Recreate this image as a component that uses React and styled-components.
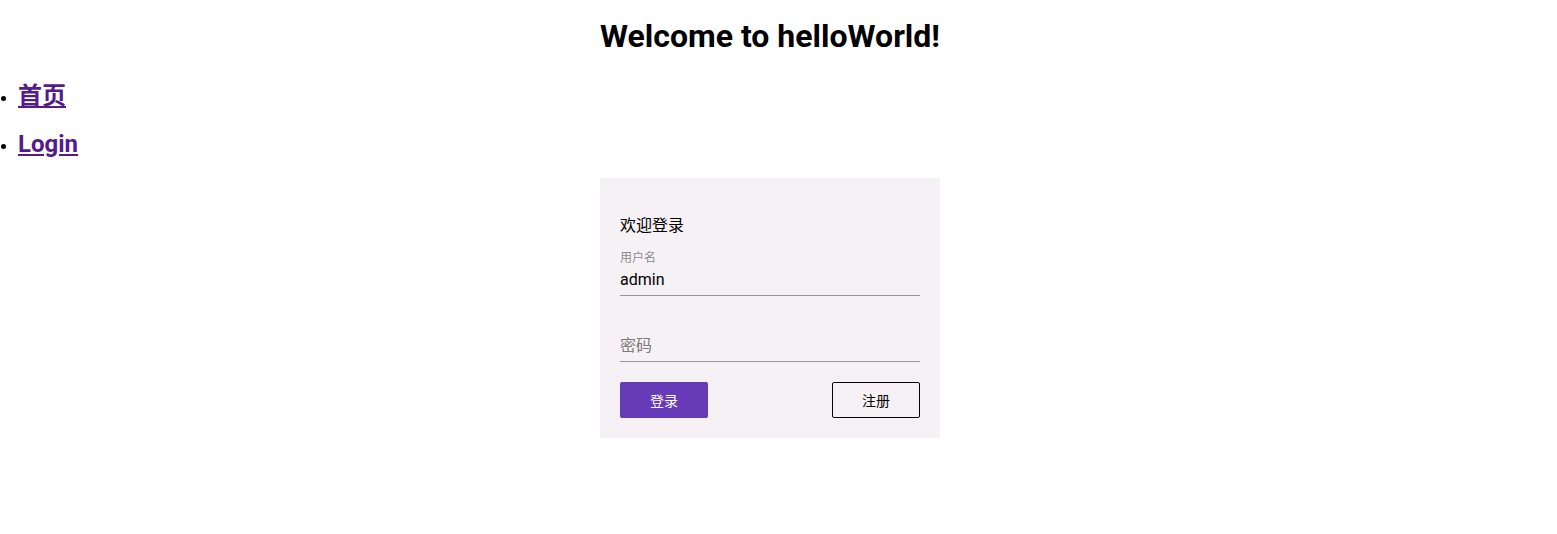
import React from 'react';
import styled, { createGlobalStyle } from 'styled-components';

const GlobalStyle = createGlobalStyle`
  body {
    margin: 0;
    padding-right: 17px;
    font-family: Roboto, "Noto Sans CJK SC", sans-serif;
    color: #000;
    background: #fff;
  }
`;

const Title = styled.h1`
  margin: 17px 0 0;
  font-size: 32px;
  font-weight: 700;
  line-height: 38px;
  text-align: center;
`;

const NavList = styled.ul`
  margin: 27px 0 0;
  padding-left: 18px;
  list-style: disc;
`;

const NavItem = styled.li`
  font-size: 24px;
  font-weight: 700;
  line-height: 28px;
  margin-bottom: 20px;
  &::marker {
    font-size: 16px;
  }
`;

const NavLink = styled.a`
  color: #551a8b;
  text-decoration: underline;
`;

const CardRow = styled.div`
  display: flex;
  justify-content: center;
`;

const Card = styled.div`
  width: 340px;
  box-sizing: border-box;
  background: #f5f1f5;
  padding: 36px 20px 20px;
  display: flex;
  flex-direction: column;
`;

const CardTitle = styled.div`
  font-size: 16px;
  line-height: 24px;
  margin-bottom: 12px;
`;

const Field = styled.div`
  display: flex;
  flex-direction: column;
  gap: 4px;
  border-bottom: 1px solid #949494;
  padding-bottom: 5px;
  margin-bottom: ${({ $gap }) => $gap}px;
`;

const Label = styled.span`
  font-size: 12px;
  line-height: 16px;
  height: 16px;
  color: #8c8c8c;
`;

const Input = styled.input`
  border: none;
  outline: none;
  background: transparent;
  padding: 0;
  font-family: Roboto, "Noto Sans CJK SC", sans-serif;
  font-size: 16px;
  line-height: 20px;
  height: 20px;
  color: #000;
  &::placeholder {
    color: #7a7a7a;
  }
`;

const Actions = styled.div`
  display: flex;
  justify-content: space-between;
`;

const Button = styled.button`
  width: 88px;
  height: 36px;
  box-sizing: border-box;
  border-radius: 2px;
  font-family: Roboto, "Noto Sans CJK SC", sans-serif;
  font-size: 14px;
  cursor: pointer;
  background: ${({ $primary }) => ($primary ? '#673ab7' : 'transparent')};
  color: ${({ $primary }) => ($primary ? '#fff' : '#000')};
  border: ${({ $primary }) => ($primary ? 'none' : '1px solid #000')};
`;

export default function App() {
  return (
    <>
      <GlobalStyle />
      <Title>Welcome to helloWorld!</Title>
      <NavList>
        <NavItem>
          <NavLink href="#">首页</NavLink>
        </NavItem>
        <NavItem>
          <NavLink href="#">Login</NavLink>
        </NavItem>
      </NavList>
      <CardRow>
        <Card>
          <CardTitle>欢迎登录</CardTitle>
          <Field $gap={20}>
            <Label>用户名</Label>
            <Input defaultValue="admin" />
          </Field>
          <Field $gap={20}>
            <Label />
            <Input type="password" placeholder="密码" />
          </Field>
          <Actions>
            <Button $primary>登录</Button>
            <Button>注册</Button>
          </Actions>
        </Card>
      </CardRow>
    </>
  );
}
